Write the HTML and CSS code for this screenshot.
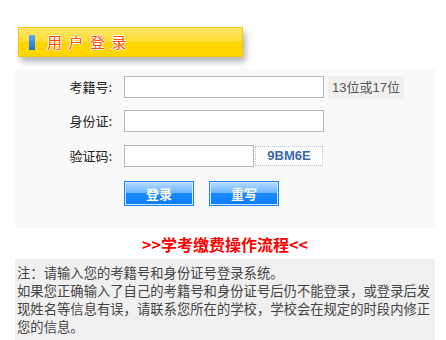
FILE: index.html
```html
<!DOCTYPE html>
<html lang="zh-CN">
<head>
    <meta charset="UTF-8">
    <title>用户登录</title>
    <link rel="stylesheet" href="styles.css">
</head>
<body>

    <div class="wrap">
        <div class="title-bar">
            <span class="mark"></span>
            <span class="title">用户登录</span>
        </div>

        <!-- 登录表单 -->
        <form class="panel" id="loginForm">
            <div class="row">
                <label class="lbl" for="ksh">考籍号:</label>
                <input type="text" id="ksh" class="txt">
                <span class="hint">13位或17位</span>
            </div>
            <div class="row">
                <label class="lbl" for="sfz">身份证:</label>
                <input type="text" id="sfz" class="txt">
            </div>
            <div class="row">
                <label class="lbl" for="yzm">验证码:</label>
                <input type="text" id="yzm" class="txt txt-short">
                <span class="code">9BM6E</span>
            </div>
            <div class="btns">
                <button type="button" class="btn">登录</button>
                <button type="reset" class="btn">重写</button>
            </div>
        </form>

        <div class="flow"><a href="#">&gt;&gt;学考缴费操作流程&lt;&lt;</a></div>

        <div class="note">
            注：请输入您的考籍号和身份证号登录系统。<br>
            如果您正确输入了自己的考籍号和身份证号后仍不能登录，或登录后发现姓名等信息有误，请联系您所在的学校，学校会在规定的时段内修正您的信息。
        </div>
    </div>

</body>
</html>
```

FILE: styles.css
```css
* {margin: 0; padding: 0; box-sizing: border-box;}

body {
    background: #fff;
    font-family: "Liberation Sans", Arial, "Noto Sans CJK SC", sans-serif;
    font-size: 13px;
    color: #222;
}

.wrap {
    width: 420px;
    margin-left: 15px;
    padding-top: 27px;
}

.title-bar {
    width: 225px;
    height: 30px;
    margin-left: 3px;
    display: flex;
    align-items: center;
    padding-left: 10px;
    border: 1px solid #f6c900;
    background: linear-gradient(#ffe66a, #ffdc2e 50%, #ffd500 52%, #ffd600);
    box-shadow: 3px 5px 6px rgba(0,0,0,0.28);
}

.mark {
    width: 6px;
    height: 15px;
    background: linear-gradient(#5aaaf5, #1a6fd8);
}

.title {
    margin-left: 12px;
    font-family: "Noto Sans CJK SC", sans-serif;
    font-size: 15px;
    line-height: 16px;
    letter-spacing: 6.5px;
    color: #ff4a00;
    text-shadow: 1px 0 0 #fff, -1px 0 0 #fff, 0 1px 0 #fff, 0 -1px 0 #fff;
}

.panel {
    margin-top: 12px;
    background: #f9f9f9;
    padding: 7px 0 22px;
}

.row {
    display: flex;
    align-items: center;
    height: 22px;
    margin-bottom: 12px;
}

.row:nth-child(2) {margin-bottom: 13px;}

.lbl {
    width: 97px;
    text-align: right;
    margin-right: 12px;
    font-family: "Noto Sans CJK SC", sans-serif;
    font-size: 13px;
    line-height: 22px;
    color: #222;
}

.txt {
    width: 200px;
    height: 22px;
    border: 1px solid #b9b9b9;
    background: #fff;
    outline: none;
}

.txt-short {width: 130px;}

.hint {
    margin-left: 4px;
    height: 23px;
    line-height: 23px;
    padding: 0 4px;
    background: #f0f0f0;
    color: #555;
    font-family: "Liberation Sans", "Noto Sans CJK SC", sans-serif;
    font-size: 13px;
}

.code {
    margin-left: 1px;
    width: 68px;
    height: 20px;
    line-height: 18px;
    border: 1px dotted #b4bfd6;
    background: #fff;
    text-align: center;
    font-weight: bold;
    font-size: 13px;
    color: #3b6aa8;
}

.btns {
    display: flex;
    gap: 15px;
    margin-left: 109px;
    margin-top: 14px;
}

.btn {
    width: 70px;
    height: 25px;
    border: 1px solid #1e84f2;
    box-shadow: inset 0 0 0 1px #cfe6ff;
    background: linear-gradient(#b8dcff, #6ab4ff 48%, #1a8aff 50%, #0a7cff);
    font-family: "Noto Sans CJK SC", sans-serif;
    font-size: 13px;
    font-weight: bold;
    color: #fffbe0;
    cursor: pointer;
}

.flow {
    height: 31px;
    display: flex;
    justify-content: center;
    align-items: center;
    padding-top: 1px;
}

.flow a {
    font-family: "Noto Sans CJK SC", sans-serif;
    font-size: 16px;
    font-weight: bold;
    line-height: 20px;
    color: #f00;
    text-decoration: none;
}

.note {
    background: #f0f0f0;
    padding: 5px 2px 4px;
    font-family: "Noto Sans CJK SC", sans-serif;
    font-size: 10pt;
    line-height: 18px;
    color: #444;
}
```
